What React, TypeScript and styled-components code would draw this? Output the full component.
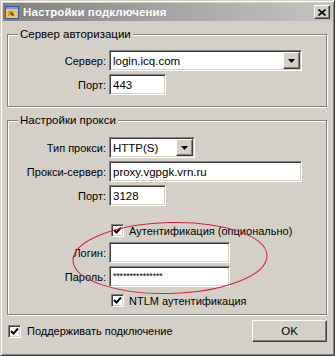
import React from "react";
import styled, { createGlobalStyle, css } from "styled-components";

const Global = createGlobalStyle`
  html, body { margin: 0; padding: 0; background: #d4d0c8; }
  body { font-family: "Liberation Sans", Arial, sans-serif; font-size: 11px; color: #000; }
  * { box-sizing: border-box; }
`;

const Window = styled.div`
  position: relative;
  width: 335px;
  height: 356px;
  background: #d4d0c8;
  border: 1px solid #d4d0c8;
  border-right-color: #404040;
  border-bottom-color: #404040;
  box-shadow: inset 1px 1px 0 #fff, inset -1px -1px 0 #808080;
  padding: 2px;
  display: flex;
  flex-direction: column;
`;

const TitleBar = styled.div`
  height: 18px;
  display: flex;
  align-items: center;
  padding: 0 2px 0 1px;
  gap: 3px;
  background: linear-gradient(to right, #808080 0%, #a8a8a8 55%, #c4c4c4 100%);
`;

const TitleText = styled.span`
  flex: 1;
  color: #fff;
  font-weight: bold;
  font-size: 11.5px;
  letter-spacing: 0.1px;
  white-space: nowrap;
`;

const raised = css`
  background: #d4d0c8;
  border: 1px solid;
  border-color: #fff #404040 #404040 #fff;
  box-shadow: inset -1px -1px 0 #808080;
`;

const sunken = css`
  background: #fff;
  border: 1px solid;
  border-color: #808080 #fff #fff #808080;
  box-shadow: inset 1px 1px 0 #404040, inset -1px -1px 0 #d4d0c8;
`;

const CloseButton = styled.div`
  ${raised};
  width: 16px;
  height: 14px;
  display: flex;
  align-items: center;
  justify-content: center;
`;

const Body = styled.div`
  flex: 1;
  display: flex;
  flex-direction: column;
  padding: 13px 4px 0 4px;
`;

const Group = styled.div<{ $mt?: number; $pt: number; $pb: number }>`
  position: relative;
  margin-top: ${(p) => p.$mt ?? 0}px;
  border: 1px solid #808080;
  box-shadow: inset 1px 1px 0 #fff, 1px 1px 0 #fff;
  margin-right: 1px;
  padding: ${(p) => p.$pt}px 0 ${(p) => p.$pb}px 0;
`;

const Legend = styled.span`
  position: absolute;
  top: -8px;
  left: 10px;
  padding: 0 2px;
  background: #d4d0c8;
  line-height: 14px;
  font-size: 11.5px;
`;

const Form = styled.div`
  display: grid;
  grid-template-columns: 98px auto;
  column-gap: 3px;
  align-items: center;
`;

const Label = styled.label<{ $mt?: number }>`
  justify-self: end;
  font-size: 11px;
  margin-top: ${(p) => p.$mt ?? 0}px;
  white-space: nowrap;
`;

const Field = styled.div<{ $w: number; $mt?: number }>`
  ${sunken};
  width: ${(p) => p.$w}px;
  height: 21px;
  margin-top: ${(p) => p.$mt ?? 0}px;
  display: flex;
  align-items: center;
  padding: 0 1px 0 3px;
  font-size: 11.5px;
  white-space: nowrap;
`;

const FieldText = styled.span`
  flex: 1;
`;

const Stars = styled.span`
  font-size: 9px;
  letter-spacing: -0.2px;
  margin-top: -2px;
`;

const DropButton = styled.div`
  ${raised};
  width: 17px;
  height: 17px;
  display: flex;
  align-items: center;
  justify-content: center;
`;

const CheckRow = styled.div<{ $mt?: number; $ml?: number }>`
  grid-column: 2;
  display: flex;
  align-items: center;
  gap: 5px;
  margin-top: ${(p) => p.$mt ?? 0}px;
  margin-left: ${(p) => p.$ml ?? 0}px;
  font-size: 11px;
  white-space: nowrap;
`;

const Box = styled.div`
  ${sunken};
  width: 13px;
  height: 13px;
  display: flex;
  align-items: center;
  justify-content: center;
`;

const Footer = styled.div`
  display: flex;
  align-items: center;
  justify-content: space-between;
  margin-top: 5px;
  padding-left: 1px;
`;

const FooterCheck = styled.div`
  display: flex;
  align-items: center;
  gap: 6px;
  font-size: 11px;
`;

const Button = styled.div`
  ${raised};
  width: 75px;
  height: 22px;
  display: flex;
  align-items: center;
  justify-content: center;
  font-size: 11.5px;
  margin-right: 1px;
`;

const Annotation = styled.svg`
  position: absolute;
  left: 0;
  top: 0;
  pointer-events: none;
`;

const Check = () => (
  <svg width="9" height="9" viewBox="0 0 9 9">
    <path d="M1 4 L3.5 6.5 L8 1.5" stroke="#000" strokeWidth="2" fill="none" />
  </svg>
);

const Checkbox = () => (
  <Box>
    <Check />
  </Box>
);

const Arrow = () => (
  <svg width="7" height="4" viewBox="0 0 7 4">
    <path d="M0 0 H7 L3.5 4 Z" fill="#000" />
  </svg>
);

const AppIcon = () => (
  <svg width="16" height="16" viewBox="0 0 16 16">
    <rect x="1" y="2" width="14" height="13" fill="#2a5db0" />
    <rect x="2" y="5" width="12" height="9" fill="#f2c94c" />
    <rect x="2" y="3" width="12" height="2" fill="#6e9be0" />
    <path d="M4 7 h6 v5 h-6 z" fill="#e09a2a" />
    <path d="M6 9 l3 3 l1 -1 l-3 -3 z" fill="#1f3f80" />
  </svg>
);

export default function App() {
  return (
    <>
      <Global />
      <Window>
        <TitleBar>
          <AppIcon />
          <TitleText>Настройки подключения</TitleText>
          <CloseButton>
            <svg width="8" height="7" viewBox="0 0 8 7">
              <path d="M0.5 0.5 L7.5 6.5 M7.5 0.5 L0.5 6.5" stroke="#000" strokeWidth="1.6" />
            </svg>
          </CloseButton>
        </TitleBar>
        <Body>
          <Group $pt={15} $pb={11}>
            <Legend>Сервер авторизации</Legend>
            <Form>
              <Label>Сервер:</Label>
              <Field $w={193}>
                <FieldText>login.icq.com</FieldText>
                <DropButton>
                  <Arrow />
                </DropButton>
              </Field>
              <Label $mt={3}>Порт:</Label>
              <Field $w={57} $mt={3}>
                <FieldText>443</FieldText>
              </Field>
            </Form>
          </Group>
          <Group $mt={13} $pt={16} $pb={7}>
            <Legend>Настройки прокси</Legend>
            <Form>
              <Label>Тип прокси:</Label>
              <Field $w={86}>
                <FieldText>HTTP(S)</FieldText>
                <DropButton>
                  <Arrow />
                </DropButton>
              </Field>
              <Label $mt={3}>Прокси-сервер:</Label>
              <Field $w={193} $mt={3}>
                <FieldText>proxy.vgpgk.vrn.ru</FieldText>
              </Field>
              <Label $mt={3}>Порт:</Label>
              <Field $w={57} $mt={3}>
                <FieldText>3128</FieldText>
              </Field>
              <CheckRow $mt={18} $ml={2}>
                <Checkbox />
                Аутентификация (опционально)
              </CheckRow>
              <Label $mt={5}>Логин:</Label>
              <Field $w={121} $mt={5}></Field>
              <Label $mt={3}>Пароль:</Label>
              <Field $w={121} $mt={3}>
                <Stars>***************</Stars>
              </Field>
              <CheckRow $mt={7} $ml={2}>
                <Checkbox />
                NTLM аутентификация
              </CheckRow>
            </Form>
          </Group>
          <Footer>
            <FooterCheck>
              <Checkbox />
              Поддерживать подключение
            </FooterCheck>
            <Button>OK</Button>
          </Footer>
        </Body>
        <Annotation width="335" height="356" viewBox="0 0 335 356">
          <ellipse
            cx="169"
            cy="257"
            rx="97"
            ry="35.5"
            fill="none"
            stroke="#d0203c"
            strokeWidth="1"
            transform="rotate(-1.5 169 257)"
          />
        </Annotation>
      </Window>
    </>
  );
}
